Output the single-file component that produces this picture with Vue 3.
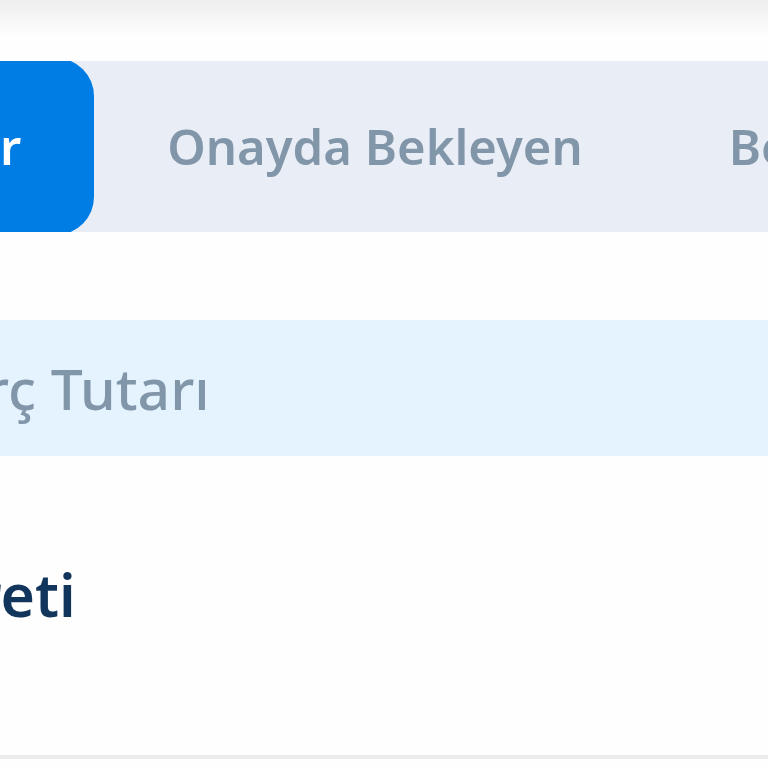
<script setup>
import { ref } from 'vue'

const tabs = ref([
  { id: 1, title: 'r' },
  { id: 2, title: 'Onayda Bekleyen' },
  { id: 3, title: 'Be' },
])

const activeTab = ref(1)

const rows = ref([
  { id: 1, name: 'reti' },
])
</script>

<template>
  <main class="page">
    <div class="top-shadow"></div>

    <nav class="tabs">
      <button
          v-for="tab in tabs"
          :key="tab.id"
          type="button"
          class="tab"
          :class="{ active: tab.id === activeTab }"
          @click="activeTab = tab.id"
      >
        {{ tab.title }}
      </button>
    </nav>

    <table class="fees">
      <thead>
        <tr>
          <th scope="col">rç Tutarı</th>
        </tr>
      </thead>
      <tbody>
        <tr v-for="row in rows" :key="row.id">
          <td>{{ row.name }}</td>
        </tr>
      </tbody>
    </table>
  </main>
</template>

<style>
body {
  background: #fefefe;
  overflow: hidden;
}
</style>

<style scoped>
.page {
  overflow: hidden;
  font-family: 'Noto Sans', 'Open Sans', sans-serif;
}

.top-shadow {
  height: 36px;
  margin-bottom: 25px;
  background: linear-gradient(#eeeeee, #fefefe);
}

.tabs {
  display: flex;
  overflow: hidden;
  background: #e9edf5;
}

.tab {
  flex: none;
  margin: -3px 0;
  padding: 56px 73px;
  border: none;
  border-radius: 38px;
  background: none;
  color: #8296aa;
  font-family: inherit;
  font-size: 49px;
  font-weight: 600;
  line-height: 65px;
  cursor: pointer;
}

.tab:first-child {
  padding-left: 0;
  border-top-left-radius: 0;
  border-bottom-left-radius: 0;
}

.tab.active {
  background: #007de5;
  color: #ffffff;
}

.fees {
  width: 100%;
  margin-top: 88px;
  border-collapse: collapse;
  text-align: left;
}

.fees th {
  padding: 28px 0;
  background: #e4f3fe;
  color: #8296aa;
  font-size: 57px;
  font-weight: 500;
  line-height: 80px;
  text-indent: -15px;
}

.fees td {
  padding: 98px 0 121px;
  border-bottom: 4px solid #ececec;
  color: #12365b;
  font-size: 59px;
  font-weight: 600;
  line-height: 80px;
  text-indent: -24px;
}
</style>
